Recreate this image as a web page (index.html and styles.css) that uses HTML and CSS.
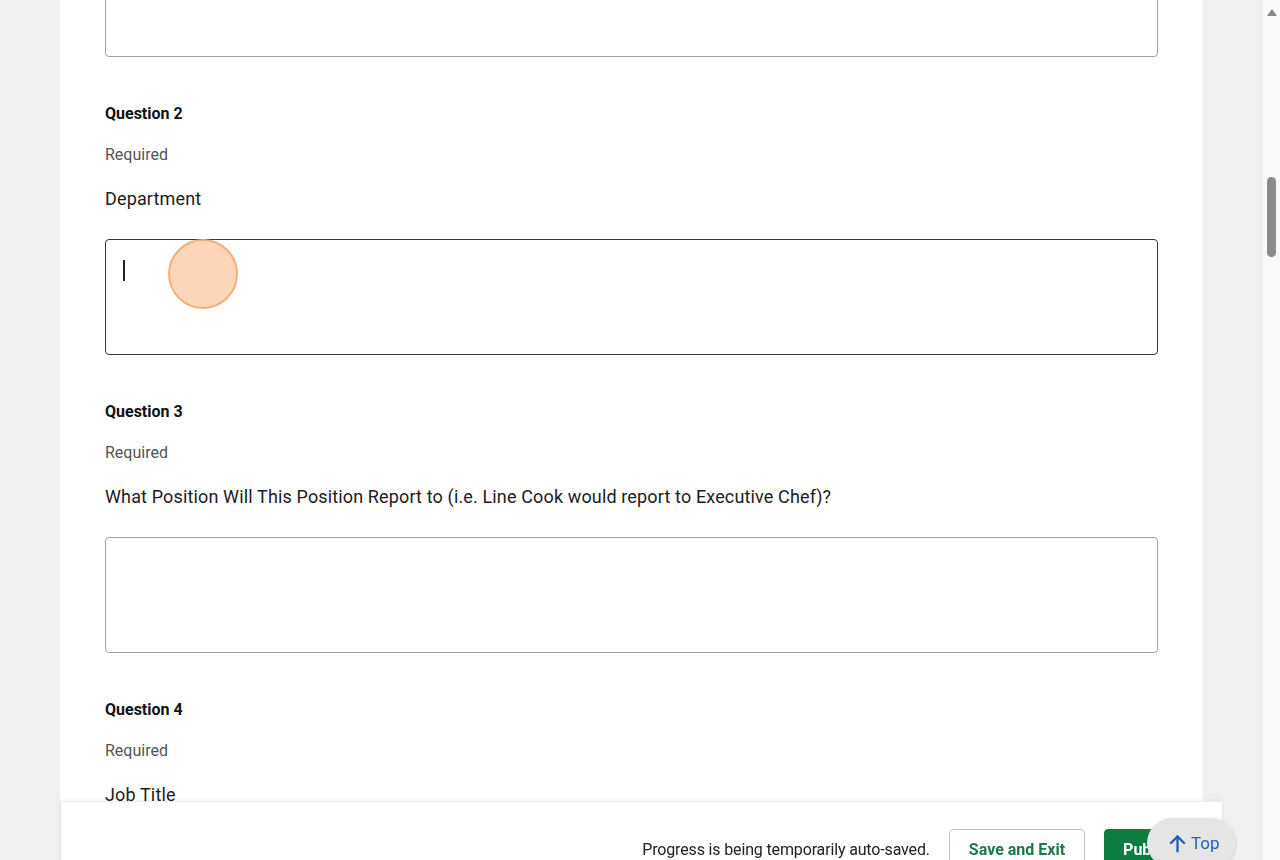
FILE: index.html
```html
<!DOCTYPE html>
<html lang="en">
<head>
    <meta charset="UTF-8">
    <meta name="viewport" content="width=device-width, initial-scale=1.0">
    <title>Job Request Form</title>
    <link rel="stylesheet" href="styles.css">
</head>
<body>
<div class="window">
    <main class="page">
        <div class="card">
            <div class="answer answer-cut"></div>

            <section class="question">
                <h3 class="q-label">Question 2</h3>
                <p class="q-req">Required</p>
                <p class="q-text">Department</p>
                <div class="answer answer-focus"><span class="caret"></span></div>
            </section>

            <section class="question">
                <h3 class="q-label">Question 3</h3>
                <p class="q-req">Required</p>
                <p class="q-text">What Position Will This Position Report to (i.e. Line Cook would report to Executive Chef)?</p>
                <div class="answer"></div>
            </section>

            <section class="question">
                <h3 class="q-label">Question 4</h3>
                <p class="q-req">Required</p>
                <p class="q-text">Job Title</p>
                <div class="answer"></div>
            </section>
        </div>
    </main>
    <div class="scrollbar">
        <span class="scroll-arrow"></span>
        <span class="scroll-thumb"></span>
    </div>
</div>

<footer class="actions">
    <span class="autosave">Progress is being temporarily auto-saved.</span>
    <button class="btn btn-outline">Save and Exit</button>
    <button class="btn btn-primary">Publish</button>
</footer>

<button class="to-top">
    <svg width="21" height="21" viewBox="0 0 24 24" fill="none" stroke="currentColor" stroke-width="2.6" stroke-linecap="round" stroke-linejoin="round">
        <path d="M12 21V4"/>
        <path d="M4.5 11.5 12 4l7.5 7.5"/>
    </svg>
    Top
</button>

<span class="click-dot"></span>
</body>
</html>
```

FILE: styles.css
```css
body {
    margin: 0;
    height: 860px;
    overflow: hidden;
    font-family: Roboto, "Liberation Sans", Arial, sans-serif;
    color: #1c1c1c;
    background-color: #f0f0f0;
}
.window {
    display: flex;
    height: 860px;
}
.page {
    width: 1263px;
    height: 860px;
    overflow: hidden;
    background-color: #f0f0f0;
}
.card {
    margin-left: 60px;
    width: 1143px;
    min-height: 100%;
    box-sizing: border-box;
    padding: 0 45px 120px;
    background-color: #fff;
}
.question {
    padding-top: 47px;
}
.q-label {
    margin: 0;
    font-size: 16px;
    line-height: 20px;
    font-weight: 700;
    color: #111;
}
.q-req {
    margin: 19px 0 0;
    font-size: 16px;
    line-height: 24px;
    color: #555;
}
.q-text {
    margin: 19px 0 0;
    font-size: 18px;
    line-height: 26px;
    letter-spacing: 0.14px;
    color: #1c1c1c;
}
.answer {
    margin-top: 27px;
    height: 116px;
    box-sizing: border-box;
    padding: 20px 17px;
    border: 1px solid #a3a3a3;
    border-radius: 4px;
    background-color: #fff;
}
.answer-cut {
    margin-top: -59px;
}
.answer-focus {
    border-color: #2f3d3d;
}
.caret {
    display: inline-block;
    width: 1.5px;
    height: 21px;
    background-color: #222;
}

/* fake scrollbar */
.scrollbar {
    width: 17px;
    height: 860px;
    background-color: #f9f9f9;
    display: flex;
    flex-direction: column;
    align-items: center;
}
.scroll-arrow {
    margin-top: 9px;
    width: 0;
    height: 0;
    border-left: 5px solid transparent;
    border-right: 5px solid transparent;
    border-bottom: 7px solid #8a8a8a;
}
.scroll-thumb {
    margin-top: 161px;
    width: 9px;
    height: 80px;
    border-radius: 5px;
    background-color: #8b8b8b;
}

/* sticky action bar */
.actions {
    position: fixed;
    left: 60px;
    top: 801px;
    width: 1162px;
    height: 95px;
    box-sizing: border-box;
    padding: 27px 26px 0 0;
    display: flex;
    justify-content: flex-end;
    align-items: flex-start;
    gap: 19px;
    background-color: #fff;
    border-top: 1px solid #ececec;
    border-left: 1px solid #e4e4e4;
    box-shadow: 0 -1px 4px rgba(0, 0, 0, 0.05);
}
.autosave {
    padding-top: 1px;
    font-size: 16px;
    line-height: 40px;
    letter-spacing: -0.15px;
    color: #222;
}
.btn {
    height: 40px;
    padding: 0 19px;
    border-radius: 4px;
    font-family: inherit;
    font-size: 16px;
    font-weight: 700;
}
.btn-outline {
    border: 1px solid #bcc7c3;
    background-color: #fff;
    color: #1b7a45;
}
.btn-primary {
    border: 1px solid #0b7d3e;
    background-color: #0b7d3e;
    color: #fff;
    padding: 0 18px;
}
.to-top {
    position: fixed;
    left: 1147px;
    top: 818px;
    width: 89px;
    height: 50px;
    padding: 0 0 0 20px;
    display: flex;
    align-items: center;
    gap: 3px;
    border: none;
    border-radius: 25px;
    background-color: #e5e5e5;
    box-shadow: 0 1px 3px rgba(0, 0, 0, 0.18);
    font-family: inherit;
    font-size: 17px;
    color: #1d5fbf;
}

/* click marker */
.click-dot {
    position: fixed;
    left: 168px;
    top: 239px;
    width: 66px;
    height: 66px;
    border: 2px solid #f2b077;
    border-radius: 50%;
    background-color: #fdd6ba;
}
```
